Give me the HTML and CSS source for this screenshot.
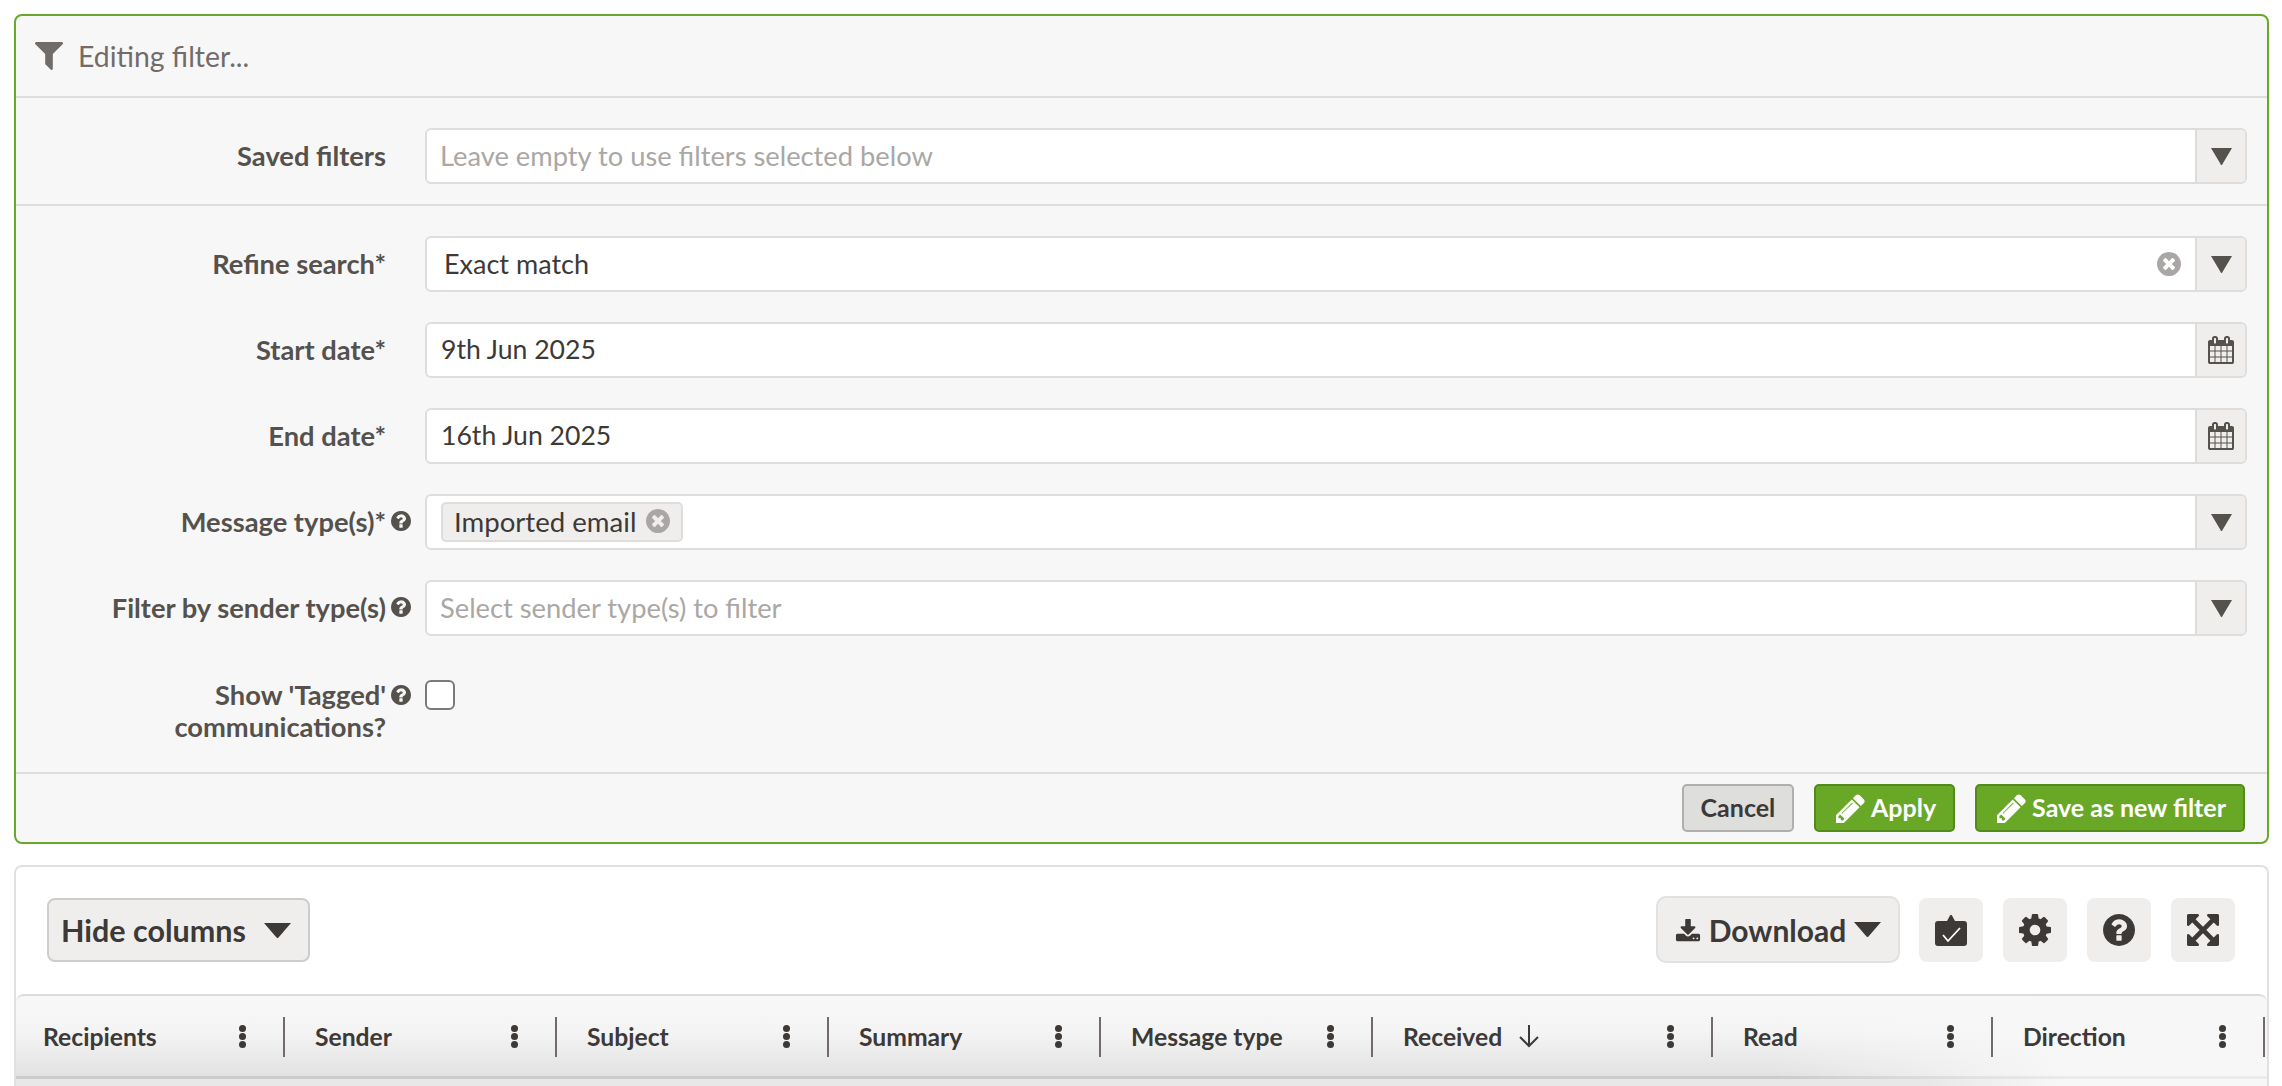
FILE: index.html
```html
<!DOCTYPE html>
<html lang="en">
<head>
<meta charset="utf-8">
<title>Filter</title>
<link rel="stylesheet" href="styles.css">
</head>
<body>
<svg class="defs" width="0" height="0" aria-hidden="true">
  <symbol id="i-clear" viewBox="128 128 1536 1536"><path d="M1277 1122q0-26-19-45l-181-181 181-181q19-19 19-45 0-27-19-46l-90-90q-19-19-46-19-26 0-45 19l-181 181-181-181q-19-19-45-19-27 0-46 19l-90 90q-19 19-19 46 0 26 19 45l181 181-181 181q-19 19-19 45 0 27 19 46l90 90q19 19 46 19 26 0 45-19l181-181 181 181q19 19 45 19 27 0 46-19l90-90q19-19 19-46zm387-226q0 209-103 385.500t-279.500 279.500-385.500 103-385.500-103-279.500-279.500-103-385.500 103-385.500 279.500-279.500 385.500-103 385.500 103 279.500 279.500 103 385.500z"/></symbol>
  <symbol id="i-arrow" viewBox="0 0 21 17"><path d="M0 0h21L11.500 16a1 1 0 0 1-2 0z"/></symbol>
  <symbol id="i-cal" viewBox="64 0 1664 1792"><path d="M192 1664h288v-288h-288v288zm352 0h320v-288h-320v288zm-352-352h288v-320h-288v320zm352 0h320v-320h-320v320zm-352-384h288v-288h-288v288zm736 736h320v-288h-320v288zm-384-736h320v-288h-320v288zm768 736h288v-288h-288v288zm-384-352h320v-320h-320v320zm-352-864v-288q0-13-9.500-22.500t-22.500-9.500h-64q-13 0-22.500 9.500t-9.500 22.500v288q0 13 9.500 22.500t22.500 9.500h64q13 0 22.500-9.500t9.500-22.500zm736 864h288v-320h-288v320zm-384-384h320v-288h-320v288zm384 0h288v-288h-288v288zm32-480v-288q0-13-9.500-22.500t-22.500-9.500h-64q-13 0-22.500 9.500t-9.500 22.500v288q0 13 9.500 22.500t22.500 9.500h64q13 0 22.500-9.500t9.500-22.500zm384-64v1280q0 52-38 90t-90 38h-1408q-52 0-90-38t-38-90v-1280q0-52 38-90t90-38h128v-96q0-66 47-113t113-47h64q66 0 113 47t47 113v96h384v-96q0-66 47-113t113-47h64q66 0 113 47t47 113v96h128q52 0 90 38t38 90z"/></symbol>
  <symbol id="i-help" viewBox="128 128 1536 1536"><path d="M1024 1376v-192q0-14-9-23t-23-9h-192q-14 0-23 9t-9 23v192q0 14 9 23t23 9h192q14 0 23-9t9-23zm256-672q0-88-55.500-163t-138.500-116-170-41q-243 0-371 213-15 24 8 42l132 100q7 6 19 6 16 0 25-12 53-68 86-92 34-24 86-24 48 0 85.500 26t37.500 59q0 38-20 61t-68 45q-63 28-115.500 86.500t-52.500 125.500v36q0 14 9 23t23 9h192q14 0 23-9t9-23q0-19 21.500-49.500t54.500-49.500q32-18 49-28.500t46-35 44.500-48 28-60.500 12.500-81zm384 192q0 209-103 385.500t-279.500 279.500-385.500 103-385.500-103-279.500-279.500-103-385.500 103-385.500 279.500-279.500 385.500-103 385.500 103 279.500 279.500 103 385.500z"/></symbol>
  <symbol id="i-pencil" viewBox="128 128 1536 1536"><path d="M491 1536l91-91-235-235-91 91v107h128v128h107zm523-928q0-22-22-22-10 0-17 7l-542 542q-7 7-7 17 0 22 22 22 10 0 17-7l542-542q7-7 7-17zm-54-192l416 416-832 832h-416v-416zm683 96q0 53-37 90l-166 166-416-416 166-165q36-38 90-38 53 0 91 38l235 234q37 39 37 91z"/></symbol>
</svg>

<main class="page">
  <section class="filter">
    <header class="filter-head">
      <svg class="funnel" viewBox="192 256 1408 1408"><path d="M1595 295q17 41-14 70l-493 493v742q0 42-39 59-13 5-25 5-27 0-45-19l-256-256q-19-19-19-45v-486l-493-493q-31-29-14-70 17-39 59-39h1280q42 0 59 39z"/></svg>
      <span>Editing filter...</span>
    </header>

    <div class="group group-saved">
      <div class="row">
        <label class="lbl">Saved filters</label>
        <div class="field">
          <div class="field-main placeholder">Leave empty to use filters selected below</div>
          <div class="addon"><svg class="arrow"><use href="#i-arrow"/></svg></div>
        </div>
      </div>
    </div>

    <div class="group group-main">
      <div class="row">
        <label class="lbl">Refine search*</label>
        <div class="field">
          <div class="field-main value-select"><span>Exact match</span><svg class="clear"><use href="#i-clear"/></svg></div>
          <div class="addon"><svg class="arrow"><use href="#i-arrow"/></svg></div>
        </div>
      </div>
      <div class="row">
        <label class="lbl">Start date*</label>
        <div class="field">
          <div class="field-main date">9th Jun 2025</div>
          <div class="addon"><svg class="cal"><use href="#i-cal"/></svg></div>
        </div>
      </div>
      <div class="row">
        <label class="lbl">End date*</label>
        <div class="field">
          <div class="field-main date">16th Jun 2025</div>
          <div class="addon"><svg class="cal"><use href="#i-cal"/></svg></div>
        </div>
      </div>
      <div class="row">
        <label class="lbl has-help">Message type(s)*<svg class="help"><use href="#i-help"/></svg></label>
        <div class="field">
          <div class="field-main tags"><span class="tag">Imported email<svg class="clear"><use href="#i-clear"/></svg></span></div>
          <div class="addon"><svg class="arrow"><use href="#i-arrow"/></svg></div>
        </div>
      </div>
      <div class="row">
        <label class="lbl has-help">Filter by sender type(s)<svg class="help"><use href="#i-help"/></svg></label>
        <div class="field">
          <div class="field-main placeholder">Select sender type(s) to filter</div>
          <div class="addon"><svg class="arrow"><use href="#i-arrow"/></svg></div>
        </div>
      </div>
      <div class="row row-check">
        <label class="lbl has-help lbl-two">Show 'Tagged'<svg class="help"><use href="#i-help"/></svg><br>communications?</label>
        <span class="checkbox"></span>
      </div>
    </div>

    <footer class="filter-foot">
      <button class="btn btn-cancel">Cancel</button>
      <button class="btn btn-green"><svg class="pencil"><use href="#i-pencil"/></svg>Apply</button>
      <button class="btn btn-green"><svg class="pencil"><use href="#i-pencil"/></svg>Save as new filter</button>
    </footer>
  </section>

  <section class="results">
    <div class="toolbar">
      <button class="hide-cols">Hide columns<svg class="caret" viewBox="0 0 27 15"><path d="M0 0h27L14.500 14.500a1.300 1.300 0 0 1-2 0z"/></svg></button>
      <div class="tools">
        <button class="download">
          <svg class="dl-icon" viewBox="0 128 1792 1408"><path d="M1344 1344q0-26-19-45t-45-19-45 19-19 45 19 45 45 19 45-19 19-45zm256 0q0-26-19-45t-45-19-45 19-19 45 19 45 45 19 45-19 19-45zm128-224v320q0 40-28 68t-68 28h-1472q-40 0-68-28t-28-68v-320q0-40 28-68t68-28h465l135 136q58 56 136 56t136-56l136-136h464q40 0 68 28t28 68zm-325-569q17 41-14 70l-448 448q-18 19-45 19t-45-19l-448-448q-31-29-14-70 17-39 59-39h256v-448q0-26 19-45t45-19h256q26 0 45 19t19 45v448h256q42 0 59 39z"/></svg>
          <span>Download</span>
          <svg class="caret" viewBox="0 0 27 15"><path d="M0 0h27L14.500 14.500a1.300 1.300 0 0 1-2 0z"/></svg>
        </button>
        <button class="tool"><svg viewBox="0 0 32 32"><path d="M3 7h9L15 1.500q1-1.500 2 0L20 7h9a3 3 0 0 1 3 3v19a3 3 0 0 1-3 3H3a3 3 0 0 1-3-3V10a3 3 0 0 1 3-3z"/><path class="tick" d="M8 21l5 6L25 14"/></svg></button>
        <button class="tool"><svg viewBox="128 128 1536 1536"><path d="M1152 896q0-106-75-181t-181-75-181 75-75 181 75 181 181 75 181-75 75-181zm512-109v222q0 12-8 23t-20 13l-185 28q-19 54-39 91 35 50 107 138 10 12 10 25t-9 23q-27 37-99 108t-94 71q-12 0-26-9l-138-108q-44 23-91 38-16 136-29 186-7 28-36 28h-222q-14 0-24.500-8.500t-11.500-21.500l-28-184q-49-16-90-37l-141 107q-10 9-25 9-14 0-25-11-126-114-165-168-7-10-7-23 0-12 8-23 15-21 51-66.500t54-70.500q-27-50-41-99l-183-27q-13-2-21-12.500t-8-23.500v-222q0-12 8-23t19-13l186-28q14-46 39-92-40-57-107-138-10-12-10-24 0-10 9-23 26-36 98.500-107.500t94.500-71.500q13 0 26 10l138 107q44-23 91-38 16-136 29-186 7-28 36-28h222q14 0 24.500 8.500t11.500 21.500l28 184q49 16 90 37l142-107q9-9 24-9 13 0 25 10 129 119 165 170 7 8 7 22 0 12-8 23-15 21-51 66.500t-54 70.500q26 50 41 98l183 28q13 2 21 12.500t8 23.500z"/></svg></button>
        <button class="tool"><svg><use href="#i-help"/></svg></button>
        <button class="tool"><svg viewBox="128 128 1536 1536"><path d="M1411 541l-355 355 355 355 144-144q29-31 70-14 39 17 39 59v448q0 26-19 45t-45 19h-448q-42 0-59-40-17-39 14-69l144-144-355-355-355 355 144 144q31 30 14 69-17 40-59 40h-448q-26 0-45-19t-19-45v-448q0-42 40-59 39-17 69 14l144 144 355-355-355-355-144 144q-19 19-45 19-12 0-24-5-40-17-40-59v-448q0-26 19-45t45-19h448q42 0 59 40 17 39-14 69l-144 144 355 355 355-355-144-144q-31-30-14-69 17-40 59-40h448q26 0 45 19t19 45v448q0 42-39 59-13 5-25 5-26 0-45-19z"/></svg></button>
      </div>
    </div>

    <div class="thead">
      <div class="th"><span class="th-name">Recipients</span><span class="kebab"></span></div>
      <div class="th"><span class="th-name">Sender</span><span class="kebab"></span></div>
      <div class="th"><span class="th-name">Subject</span><span class="kebab"></span></div>
      <div class="th"><span class="th-name">Summary</span><span class="kebab"></span></div>
      <div class="th"><span class="th-name">Message type</span><span class="kebab"></span></div>
      <div class="th th-wide"><span class="th-name">Received<svg class="sort" viewBox="0 0 22 24"><path d="M11 1v21M2 13l9 9 9-9"/></svg></span><span class="kebab"></span></div>
      <div class="th th-read"><span class="th-name">Read</span><span class="kebab"></span></div>
      <div class="th"><span class="th-name">Direction</span><span class="kebab"></span></div>
    </div>
    <div class="tbody"></div>
  </section>
</main>
</body>
</html>
```
FILE: styles.css
```css
* { box-sizing: border-box; }
html, body { margin: 0; height: 100%; overflow: hidden; background: #fff; }
body { font-family: "Lato", "Open Sans", sans-serif; font-size: 27px; color: #3d3937; }
.defs { position: absolute; }
.page { height: 100%; padding: 14px 13px 0 14px; display: flex; flex-direction: column; gap: 21px; }

.filter { height: 830px; flex: none; border: 2px solid #6aa82c; border-radius: 8px; background: #f8f7f7; display: flex; flex-direction: column; }
.filter-head { height: 82px; flex: none; display: flex; align-items: center; gap: 15px; padding-left: 19px; border-bottom: 2px solid #dfdddc; color: #716c69; font-size: 28.4px; }
.funnel { width: 28px; height: 28px; fill: #716c69; }

.group { flex: none; padding-right: 20px; }
.group-saved { height: 108px; padding-top: 30px; border-bottom: 2px solid #dfdddc; }
.group-main { flex: 1; padding-top: 30px; display: flex; flex-direction: column; gap: 30px; }
.row { display: flex; align-items: center; height: 56px; }
.lbl { width: 370px; flex: none; padding-bottom: 2px; text-align: right; font-weight: 700; font-size: 27.3px; color: #55514d; position: relative; }
.help { position: absolute; left: 375px; top: 6px; width: 20px; height: 20px; fill: #55514d; }
.field { margin-left: 39px; flex: 1; display: flex; height: 56px; border: 2px solid #dfdddc; border-radius: 6px; background: #fff; overflow: hidden; }
.field-main { flex: 1; display: flex; align-items: center; padding: 0 0 2px 14px; font-size: 27px; color: #3d3937; }
.date { font-size: 26.6px; }
.placeholder { color: #aaa7a5; font-size: 27.3px; padding-left: 13px; }
.value-select { justify-content: space-between; padding-left: 17px; padding-right: 14px; }
.clear { width: 24px; height: 24px; fill: #a9a6a5; }
.value-select .clear { margin-top: 2px; }
.addon { width: 50px; flex: none; display: flex; align-items: center; justify-content: center; background: #efeeed; border-left: 2px solid #dfdddc; }
.arrow { width: 21px; height: 17px; fill: #55514d; }
.cal { width: 26px; height: 28px; fill: #55514d; }
.tags { padding-bottom: 0; }
.tag { height: 40px; display: inline-flex; align-items: center; gap: 10px; padding: 0 11px 2px 11px; background: #efeeed; border: 2px solid #dfdddc; border-radius: 5px; font-size: 27.6px; }
.row-check { align-items: flex-start; margin-top: 14px; }
.lbl-two { line-height: 32px; padding-bottom: 0; margin-top: -1px; }
.lbl-two .help { top: 6px; }
.checkbox { margin-left: 39px; width: 30px; height: 30px; border: 2px solid #7d7976; border-radius: 6px; background: #fff; }

.filter-foot { flex: none; height: 70px; border-top: 2px solid #dfdddc; display: flex; align-items: flex-start; justify-content: flex-end; gap: 20px; padding: 10px 22px 0 0; }
.btn { height: 48px; padding: 0 17px 2px 20px; border-radius: 5px; font: 700 25px "Lato", sans-serif; display: inline-flex; align-items: center; gap: 6px; }
.btn-cancel { width: 112px; justify-content: center; padding: 0 0 2px; background: #dededd; border: 2px solid #b1afad; color: #3d3937; }
.btn-green { background: #69a826; border: 2px solid #538a1c; color: #fff; }
.pencil { width: 29px; height: 29px; fill: #fff; margin-top: 2px; }

.results { flex: 1; min-height: 0; border: 2px solid #e2e1e0; border-bottom: 0; border-radius: 8px 8px 0 0; display: flex; flex-direction: column; }
.toolbar { height: 127px; flex: none; display: flex; justify-content: space-between; padding: 31px 32px 0 31px; }
.hide-cols { height: 64px; width: 263px; display: flex; align-items: center; gap: 18px; padding: 0 0 0 12px; background: #efeeed; border: 2px solid #cfcdcb; border-radius: 8px; font: 700 30.5px "Lato", sans-serif; color: #3d3937; }
.caret { width: 27px; height: 15px; fill: #3d3937; flex: none; }
.tools { display: flex; gap: 20px; align-items: flex-start; margin-top: -2px; }
.download { height: 67px; width: 244px; margin-right: -1px; display: flex; align-items: center; justify-content: center; gap: 8px; padding: 0; background: #efeeed; border: 2px solid #e2e1e0; border-radius: 10px; font: 700 30px "Lato", sans-serif; color: #3d3937; }
.dl-icon { width: 26px; height: 24px; fill: #3d3937; margin-top: 2px; }
.tool { margin-top: 2px; width: 64px; height: 64px; padding: 0; display: flex; align-items: center; justify-content: center; background: #efeeed; border: 0; border-radius: 8px; }
.tool svg { width: 32px; height: 32px; fill: #3d3937; }
.tool .tick { fill: none; stroke: #fff; stroke-width: 1.8; }

.thead { height: 82px; flex: none; display: flex; border-top: 2px solid #dedcdb; border-radius: 8px 8px 0 0; background: linear-gradient(to right, rgba(248,247,247,0) 78%, #f8f7f7 91%), linear-gradient(#f9f8f8, #f5f4f4 45%, #e3e2e3); align-items: center; padding-left: 2px; }
.th { width: 272px; flex: none; height: 40px; display: flex; align-items: center; justify-content: space-between; padding: 0 37px 0 30px; margin-top: 2px; border-right: 2px solid #716c69; font-weight: 700; font-size: 24.7px; color: #3d3937; }
.th:first-child { width: 267px; padding-left: 25px; }
.th-wide { width: 340px; }
.th-read { width: 280px; }
.th-name { display: inline-flex; align-items: center; gap: 16px; padding-bottom: 2px; }
.sort { width: 22px; height: 24px; fill: none; stroke: #3d3937; stroke-width: 2; }
.kebab { width: 7px; height: 7px; margin-top: -2px; border-radius: 50%; background: #3d3937; box-shadow: 0 -8px 0 #3d3937, 0 8px 0 #3d3937; }
.tbody { flex: 1; border-top: 3px solid; border-image: linear-gradient(to right, #cdcbca 78%, #eceaea 91%) 1; background: linear-gradient(to right, #e9e8e8 85%, #f8f7f7 91%); }
```
